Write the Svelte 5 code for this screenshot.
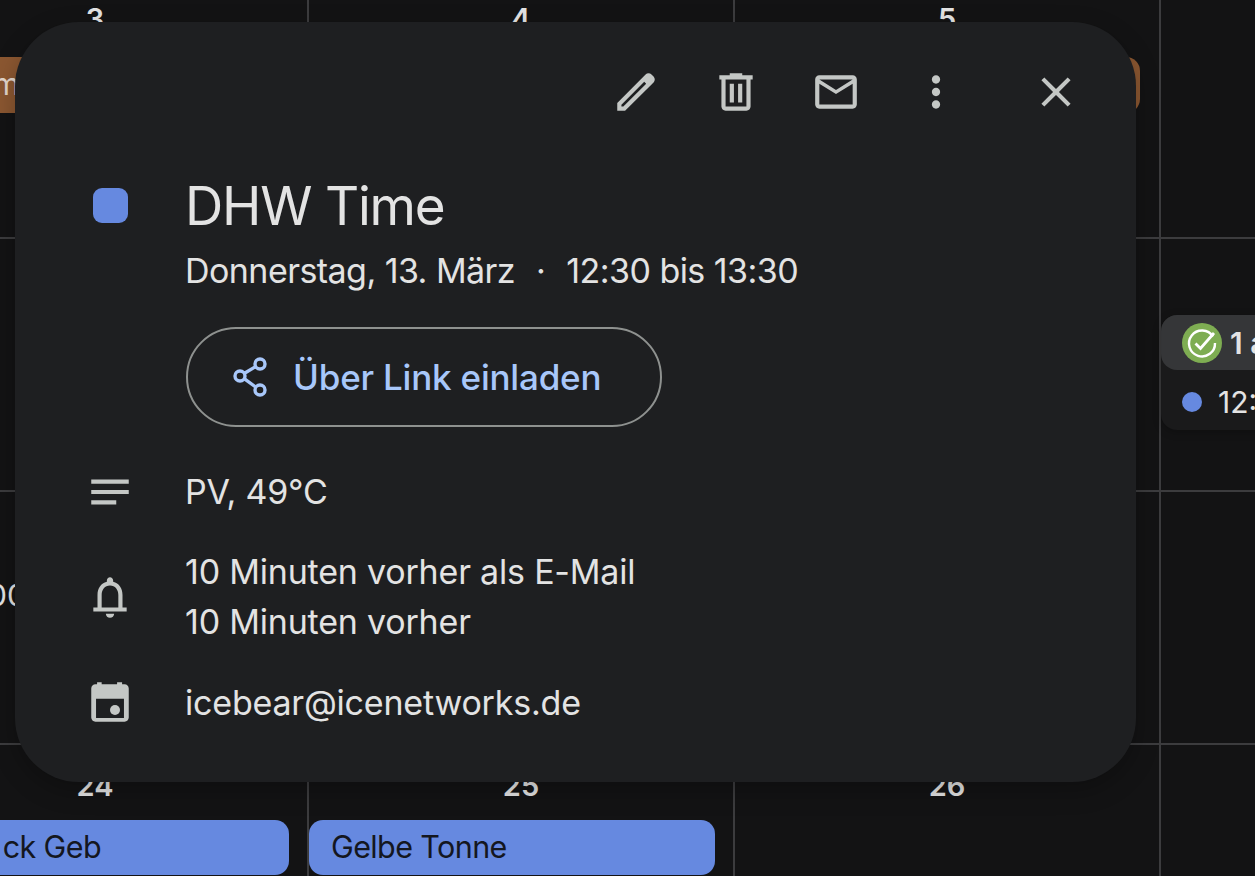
<script>
  const rows = [
    ['3', '4', '5', ''],
    ['', '', '', ''],
    ['', '', '', ''],
    ['24', '25', '26', '']
  ];
</script>

<div class="page">
  <div class="calendar">
    {#each rows as row, r}
      {#each row as day, c}
        <div class="cell" style="grid-row: {r + 1}; grid-column: {c + 1}"><span class="day">{day}</span></div>
      {/each}
    {/each}

    <div class="event orange">m</div>
    <div class="clip-time">00</div>

    <div class="agenda">
      <div class="agenda-top">
        <span class="done">
          <svg viewBox="0 0 40 40" width="40" height="40">
            <circle cx="20" cy="20" r="20" fill="#7ead52" />
            <path d="M31 13.5A13 13 0 1 0 33 20" fill="none" stroke="#fff" stroke-width="2.4" />
            <path d="M13.5 20.5l5 5L32 10" fill="none" stroke="#fff" stroke-width="2.8" />
          </svg>
        </span>
        <span>1 a</span>
      </div>
      <div class="agenda-row">
        <span class="dot"></span>
        <span>12:30</span>
      </div>
    </div>

    <div class="event blue geb">ck Geb</div>
    <div class="event blue tonne">Gelbe Tonne</div>
  </div>

  <section class="dialog">
    <header class="actions">
      <button aria-label="Bearbeiten">
        <svg viewBox="0 0 24 24"><path fill-rule="evenodd" d="M3 21v-3.75L16.6 3.6c.78-.78 2.05-.78 2.83 0l1 1c.78.78.78 2.05 0 2.83L6.75 21H3zM5 19h.92L16.9 8.05l-.95-.95L5 18.08V19z" /></svg>
      </button>
      <button aria-label="Löschen">
        <svg viewBox="0 0 24 24"><path d="M15 4V3H9v1H4v2h1v13c0 1.1.9 2 2 2h10c1.1 0 2-.9 2-2V6h1V4h-5zm2 15H7V6h10v13zM9 8h2v9H9zm4 0h2v9h-2z" /></svg>
      </button>
      <button aria-label="E-Mail">
        <svg viewBox="0 0 24 24"><path d="M20 4H4c-1.1 0-2 .9-2 2v12c0 1.1.9 2 2 2h16c1.1 0 2-.9 2-2V6c0-1.1-.9-2-2-2zm0 14H4V8l8 5 8-5v10zm-8-7L4 6h16l-8 5z" /></svg>
      </button>
      <button aria-label="Mehr">
        <svg viewBox="0 0 24 24"><path d="M12 8c1.1 0 2-.9 2-2s-.9-2-2-2-2 .9-2 2 .9 2 2 2zm0 2c-1.1 0-2 .9-2 2s.9 2 2 2 2-.9 2-2-.9-2-2-2zm0 6c-1.1 0-2 .9-2 2s.9 2 2 2 2-.9 2-2-.9-2-2-2z" /></svg>
      </button>
      <button class="close" aria-label="Schließen">
        <svg viewBox="0 0 24 24"><path d="M19 6.41 17.59 5 12 10.59 6.41 5 5 6.41 10.59 12 5 17.59 6.41 19 12 13.41 17.59 19 19 17.59 13.41 12z" /></svg>
      </button>
    </header>

    <div class="title-row">
      <div class="icon-col"><span class="swatch"></span></div>
      <div>
        <h1>DHW Time</h1>
        <p class="when">Donnerstag, 13. März <span class="sep">·</span> 12:30 bis 13:30</p>
        <button class="invite">
          <svg viewBox="0 0 40 44" width="40" height="44">
            <g fill="none" stroke="#a8c7fa" stroke-width="3.4">
              <circle cx="30" cy="9" r="5" />
              <circle cx="10" cy="21" r="5" />
              <circle cx="30" cy="35" r="5" />
              <path d="M14.5 18.3 25.6 11.6M14.5 23.9 25.6 32" />
            </g>
          </svg>
          Über Link einladen
        </button>
      </div>
    </div>

    <div class="row notes">
      <div class="icon-col">
        <svg viewBox="0 0 24 24"><path d="M3 18h12v-2H3v2zM3 6v2h18V6H3zm0 7h18v-2H3v2z" /></svg>
      </div>
      <div>PV, 49°C</div>
    </div>

    <div class="row reminders">
      <div class="icon-col">
        <svg viewBox="0 0 24 24"><path d="M18 17v-6c0-3.07-1.63-5.64-4.5-6.32V4c0-.83-.67-1.5-1.5-1.5s-1.5.67-1.5 1.5v.68C7.64 5.36 6 7.92 6 11v6H4v2h16v-2h-2zm-2 0H8v-6c0-2.48 1.51-4.5 4-4.5s4 2.02 4 4.5v6zm-4 5c1.1 0 2-.9 2-2h-4c0 1.1.9 2 2 2z" /></svg>
      </div>
      <div>
        <div>10 Minuten vorher als E-Mail</div>
        <div>10 Minuten vorher</div>
      </div>
    </div>

    <div class="row owner">
      <div class="icon-col">
        <svg viewBox="0 0 24 24"><path fill-rule="evenodd" d="M5.8 2h2.2v1h7.4V2h2.4v1H19c1.1 0 2 .9 2 2v14c0 1.1-.9 2-2 2H5c-1.1 0-2-.9-2-2V5c0-1.1.9-2 2-2h.8V2zM5.3 10v9.2h13.4V10H5.3z" /><circle cx="14.4" cy="15.4" r="2.4" /></svg>
      </div>
      <div>icebear@icenetworks.de</div>
    </div>
  </section>
</div>

<style>
  :global(body) {
    background: #131314;
  }

  .page {
    position: relative;
    width: 1255px;
    height: 876px;
    overflow: hidden;
    background: #131314;
    font-family: Inter, Roboto, sans-serif;
    color: #e3e3e3;
  }

  .calendar {
    display: grid;
    grid-template-columns: repeat(4, 426px);
    grid-template-rows: 261px repeat(3, 253px);
    margin-left: -117px;
    margin-top: -22px;
  }

  .cell {
    border-right: 2px solid #3c3c3e;
    border-bottom: 2px solid #3c3c3e;
    text-align: center;
    padding-top: 24px;
  }

  .day {
    font-size: 29px;
    font-weight: 600;
    line-height: 34px;
  }

  .event {
    height: 55px;
    line-height: 54px;
    font-size: 30.5px;
    letter-spacing: -0.6px;
    border-radius: 14px;
    box-sizing: border-box;
  }

  .orange {
    grid-column: 1 / span 3;
    grid-row: 1;
    margin: 79px 21px 0 0;
    height: 56px;
    padding-left: 110px;
    background: #8b5731;
    color: #e3d6cc;
  }

  .clip-time {
    grid-column: 1;
    grid-row: 3;
    margin: 85px 0 0 105px;
    font-size: 30px;
    line-height: 36px;
  }

  .blue {
    grid-row: 4;
    background: #6689e0;
    color: #14171f;
    margin-top: 75px;
  }

  .geb {
    grid-column: 1;
    margin-left: 80px;
    margin-right: 20px;
    text-align: right;
    padding-right: 188px;
    white-space: nowrap;
  }

  .tonne {
    grid-column: 2;
    margin-right: 20px;
    padding-left: 22px;
  }

  .agenda {
    grid-column: 4;
    grid-row: 2;
    margin-top: 76px;
    height: 115px;
    background: #1a1a1b;
    border-radius: 16px;
    font-size: 30px;
    font-weight: 600;
    box-shadow: 0 2px 8px #00000040;
  }

  .agenda-top {
    display: flex;
    align-items: center;
    gap: 8px;
    height: 55px;
    padding-left: 21px;
    background: #353638;
    border-radius: 16px;
  }

  .done {
    display: flex;
  }

  .agenda-row {
    display: flex;
    align-items: center;
    gap: 16px;
    height: 60px;
    padding: 4px 0 0 21px;
    box-sizing: border-box;
    font-weight: 400;
  }

  .dot {
    width: 20px;
    height: 20px;
    border-radius: 50%;
    background: #6689e0;
  }

  .dialog {
    position: absolute;
    left: 15px;
    top: 22px;
    width: 1121px;
    height: 760px;
    box-sizing: border-box;
    background: #1e1f21;
    border-radius: 64px;
    box-shadow: 0 8px 24px #00000040;
    font-size: 34px;
    letter-spacing: -0.2px;
    line-height: 50px;
  }

  .actions {
    display: flex;
    justify-content: flex-end;
    padding: 45px 30px 0 0;
  }

  .actions button {
    all: unset;
    display: flex;
    justify-content: center;
    width: 100px;
    height: 50px;
  }

  .actions .close {
    width: 100px;
    margin-left: 20px;
  }

  svg {
    display: block;
  }

  .actions svg,
  .icon-col svg {
    width: 50px;
    height: 50px;
    fill: #c4c7c5;
  }

  .title-row,
  .row {
    display: flex;
  }

  .icon-col {
    display: flex;
    justify-content: center;
    align-items: center;
    width: 171px;
    padding: 0 1px 0 20px;
    box-sizing: border-box;
    flex: none;
  }

  .title-row {
    margin-top: 56px;
  }

  .title-row .icon-col {
    align-items: flex-start;
    padding-top: 15px;
  }

  .swatch {
    width: 35px;
    height: 35px;
    border-radius: 9px;
    background: #6689e0;
  }

  h1 {
    margin: 0 0 0 -1px;
    font-size: 53px;
    font-weight: 400;
    letter-spacing: -1.2px;
    line-height: 66px;
  }

  .when {
    margin: 8px 0 0 -1px;
    letter-spacing: -0.55px;
    line-height: 48px;
  }

  .sep {
    margin: 0 12px;
  }

  .invite {
    all: unset;
    display: flex;
    align-items: center;
    gap: 23px;
    box-sizing: border-box;
    width: 476px;
    height: 100px;
    margin-top: 32px;
    padding-left: 42px;
    border: 2px solid #8e918f;
    border-radius: 50px;
    color: #a8c7fa;
    font-weight: 500;
    font-size: 35px;
  }

  .row > div:last-child {
    margin-left: -1px;
    padding-top: 1px;
  }

  .notes {
    margin-top: 39px;
  }

  .reminders {
    margin-top: 29px;
  }

  .owner {
    margin-top: 30px;
  }
</style>
